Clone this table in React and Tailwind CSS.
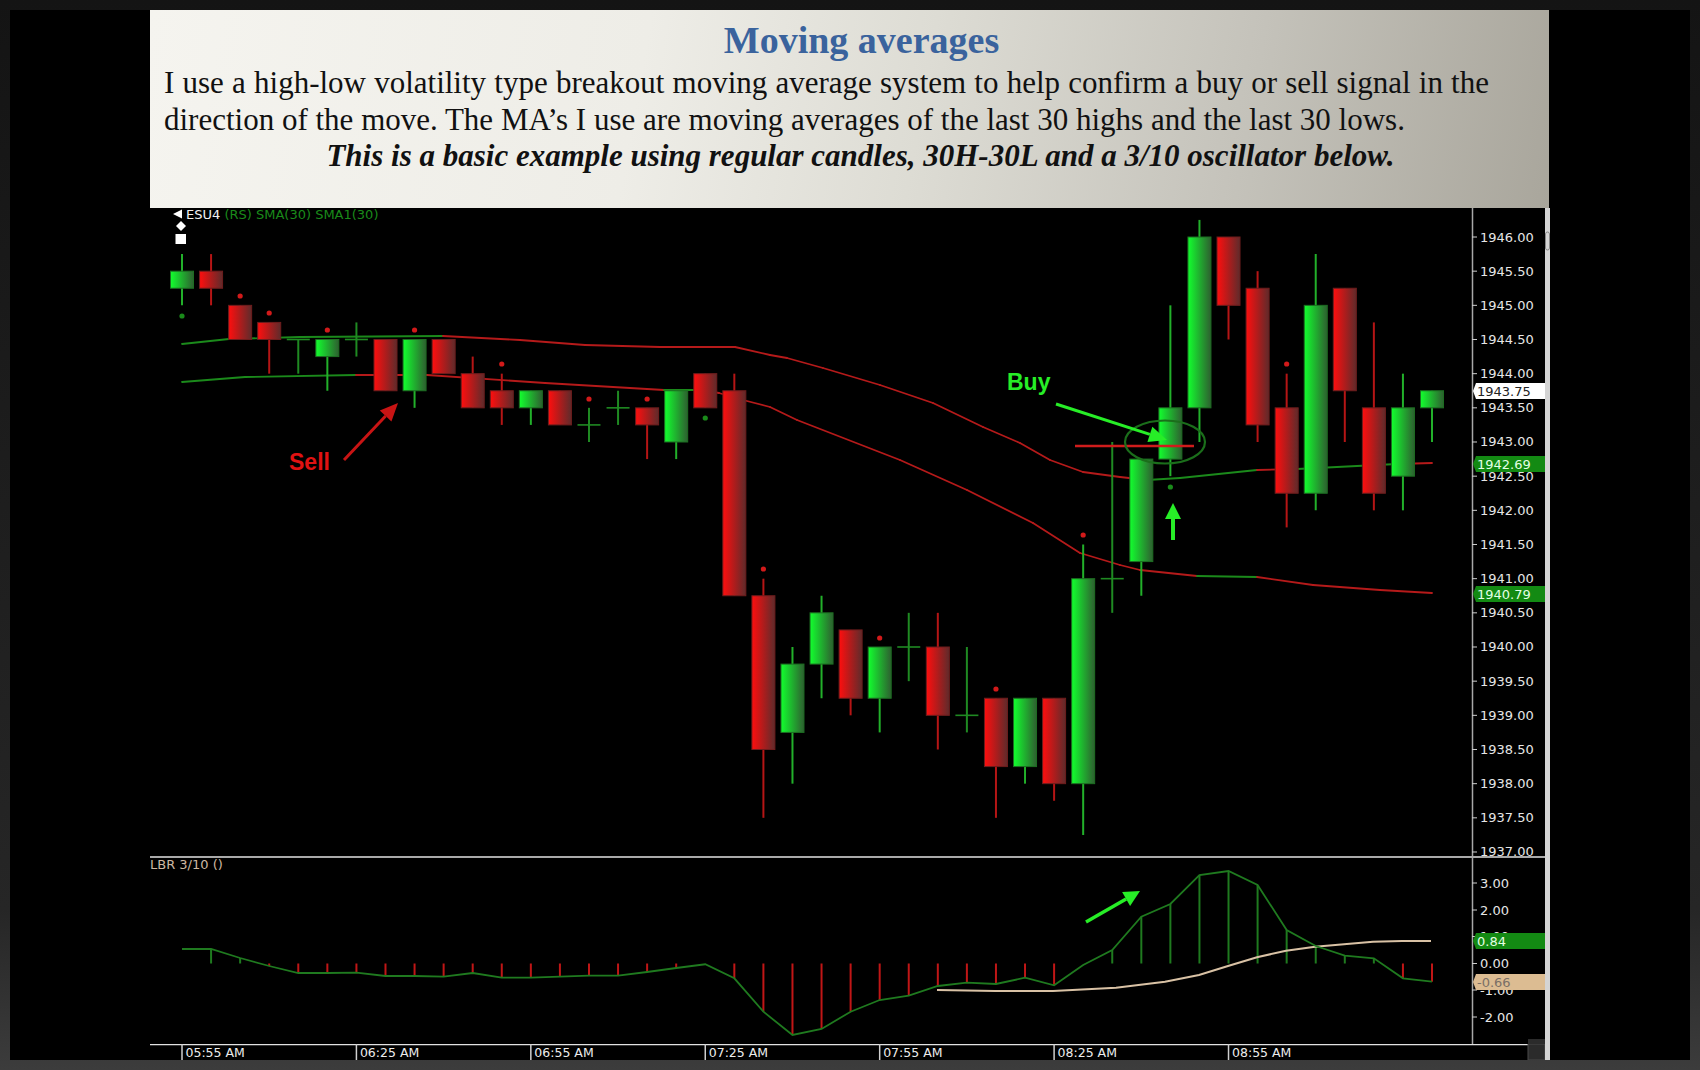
import React from 'react';

// chart geometry (page pixels)
const X0 = 182;
const DX = 29.07;
const cx = (i) => X0 + i * DX;
const py = (p) => 237 + (1946 - p) * 68.333;

// [open, high, low, close]
const CANDLES = [
  [1945.25, 1945.75, 1945.0, 1945.5],
  [1945.5, 1945.75, 1945.0, 1945.25],
  [1945.0, 1945.0, 1944.5, 1944.5],
  [1944.75, 1944.75, 1944.0, 1944.5],
  [1944.5, 1944.5, 1944.0, 1944.5],
  [1944.25, 1944.5, 1943.75, 1944.5],
  [1944.5, 1944.75, 1944.25, 1944.5],
  [1944.5, 1944.5, 1943.75, 1943.75],
  [1943.75, 1944.5, 1943.5, 1944.5],
  [1944.5, 1944.5, 1944.0, 1944.0],
  [1944.0, 1944.25, 1943.5, 1943.5],
  [1943.75, 1944.0, 1943.25, 1943.5],
  [1943.5, 1943.75, 1943.25, 1943.75],
  [1943.75, 1943.75, 1943.25, 1943.25],
  [1943.25, 1943.5, 1943.0, 1943.25],
  [1943.5, 1943.75, 1943.25, 1943.5],
  [1943.5, 1943.5, 1942.75, 1943.25],
  [1943.0, 1943.75, 1942.75, 1943.75],
  [1944.0, 1944.0, 1943.5, 1943.5],
  [1943.75, 1944.0, 1940.75, 1940.75],
  [1940.75, 1941.0, 1937.5, 1938.5],
  [1938.75, 1940.0, 1938.0, 1939.75],
  [1939.75, 1940.75, 1939.25, 1940.5],
  [1940.25, 1940.25, 1939.0, 1939.25],
  [1939.25, 1940.0, 1938.75, 1940.0],
  [1940.0, 1940.5, 1939.5, 1940.0],
  [1940.0, 1940.5, 1938.5, 1939.0],
  [1939.0, 1940.0, 1938.75, 1939.0],
  [1939.25, 1939.25, 1937.5, 1938.25],
  [1938.25, 1939.25, 1938.0, 1939.25],
  [1939.25, 1939.25, 1937.75, 1938.0],
  [1938.0, 1941.5, 1937.25, 1941.0],
  [1941.0, 1943.0, 1940.5, 1941.0],
  [1941.25, 1942.75, 1940.75, 1942.75],
  [1942.75, 1945.0, 1942.5, 1943.5],
  [1943.5, 1946.25, 1943.0, 1946.0],
  [1946.0, 1946.0, 1944.5, 1945.0],
  [1945.25, 1945.5, 1943.0, 1943.25],
  [1943.5, 1944.0, 1941.75, 1942.25],
  [1942.25, 1945.75, 1942.0, 1945.0],
  [1945.25, 1945.25, 1943.0, 1943.75],
  [1943.5, 1944.75, 1942.0, 1942.25],
  [1942.5, 1944.0, 1942.0, 1943.5],
  [1943.5, 1943.75, 1943.0, 1943.75],
];

const DOTS = [
  [0, 316, 'g'], [2, 296, 'r'], [3, 313, 'r'], [5, 330, 'r'], [8, 330, 'r'],
  [11, 364, 'r'], [14, 399, 'r'], [16, 399, 'r'], [18, 418, 'g'], [20, 569, 'r'],
  [24, 638, 'r'], [28, 689, 'r'], [31, 535, 'r'], [34, 487, 'g'], [38, 364, 'r'],
];

const UPPER_MA = [
  [182, 344, 'g'], [229, 339, 'g'], [300, 337, 'g'], [443, 336, 'r'], [520, 340, 'r'],
  [585, 345, 'r'], [660, 347, 'r'], [735, 347, 'r'], [770, 355, 'r'], [787, 358, 'r'],
  [823, 368, 'r'], [880, 385, 'r'], [933, 403, 'r'], [983, 427, 'r'], [1020, 443, 'r'],
  [1050, 460, 'r'], [1083, 472, 'r'], [1120, 477, 'r'], [1147, 480, 'g'], [1180, 478, 'g'],
  [1257, 470, 'r'], [1297, 469, 'g'], [1397, 464, 'r'], [1432, 463, 'r'],
];

const LOWER_MA = [
  [182, 382, 'g'], [245, 377, 'g'], [356, 375, 'r'], [427, 375, 'r'], [545, 383, 'r'],
  [664, 390, 'g'], [700, 390, 'r'], [719, 393, 'r'], [743, 400, 'r'], [770, 407, 'r'],
  [797, 420, 'r'], [900, 460, 'r'], [967, 490, 'r'], [1033, 523, 'r'], [1080, 553, 'r'],
  [1120, 565, 'r'], [1140, 570, 'r'], [1197, 576, 'g'], [1257, 577, 'r'], [1313, 585, 'r'],
  [1380, 590, 'r'], [1432, 593, 'r'],
];

const OSC_FAST = [
  949, 949, 958, 966, 973, 973, 972.7, 976, 976, 976.7, 973, 977.7, 977.7, 976.7, 975.7,
  975.7, 972, 968, 964.3, 978.3, 1011.7, 1035, 1029, 1011.7, 1000, 995.7, 986, 982.7, 984,
  977.7, 985.3, 965, 950, 916.7, 904, 875, 871, 885, 930, 946, 955.7, 958.3, 978.3, 981.7,
];

const OSC_SLOW = [
  [937, 990], [995, 991], [1053, 991], [1116, 987.7], [1165, 981.7], [1199, 975], [1228, 966],
  [1257, 957.3], [1286, 950.7], [1315, 946.7], [1344, 944.3], [1373, 941.7], [1402, 941], [1431, 941],
];

const ZERO = 963.5;
const GREEN = '#1f8a22';

const PRICES = [];
for (let p = 1946; p >= 1937; p -= 0.5) PRICES.push(p);

const TIMES = ['05:55 AM', '06:25 AM', '06:55 AM', '07:25 AM', '07:55 AM', '08:25 AM', '08:55 AM'];

function Tag({ y, bg, fg, text }) {
  return (
    <g>
      <path d={`M1473,${y} L1476,${y - 8} H1545 V${y + 8} H1476 Z`} fill={bg} />
      <text x={1477} y={y + 4.5} fill={fg} fontSize="13">{text}</text>
    </g>
  );
}

function Candle({ c, i }) {
  const [o, h, l, cl] = c;
  const x = cx(i);
  const up = cl >= o;
  if (o === cl) {
    return (
      <g stroke={GREEN} strokeWidth="2">
        <line x1={x} x2={x} y1={py(h)} y2={py(l)} />
        <line x1={x - 11.5} x2={x + 11.5} y1={py(o)} y2={py(o)} strokeWidth="1.6" />
      </g>
    );
  }
  const top = py(Math.max(o, cl));
  const bot = py(Math.min(o, cl));
  return (
    <g>
      <line x1={x} x2={x} y1={py(h)} y2={py(l)} stroke={up ? '#22b02a' : '#b51515'} strokeWidth="2" />
      <rect
        x={x - 11.5}
        y={top}
        width="23"
        height={bot - top}
        fill={up ? 'url(#gUp)' : 'url(#gDn)'}
        stroke={up ? '#1d6e22' : '#6e1d1d'}
        strokeWidth="1"
      />
    </g>
  );
}

function MaLine({ pts }) {
  return pts.slice(1).map((p, k) => {
    const a = pts[k];
    return (
      <line
        key={k}
        x1={a[0]}
        y1={a[1]}
        x2={p[0]}
        y2={p[1]}
        stroke={a[2] === 'g' ? '#1b8a1b' : '#b51a1a'}
        strokeWidth="1.8"
        strokeLinecap="round"
      />
    );
  });
}

function Arrow({ x1, y1, x2, y2, color, w = 3, head = 18, half = 8 }) {
  const dx = x2 - x1;
  const dy = y2 - y1;
  const len = Math.hypot(dx, dy);
  const ux = dx / len;
  const uy = dy / len;
  const bx = x2 - ux * head;
  const by = y2 - uy * head;
  return (
    <g>
      <line x1={x1} y1={y1} x2={bx} y2={by} stroke={color} strokeWidth={w} />
      <polygon
        points={`${x2},${y2} ${bx - uy * half},${by + ux * half} ${bx + uy * half},${by - ux * half}`}
        fill={color}
      />
    </g>
  );
}

function MainPane() {
  return (
    <svg width="1400" height="648" viewBox="150 208 1400 648" className="block font-['DejaVu_Sans',sans-serif]">
      <defs>
        <linearGradient id="gUp" x1="0" x2="1" y1="0" y2="0">
          <stop offset="0" stopColor="#12ff2e" />
          <stop offset="1" stopColor="#2e5f30" />
        </linearGradient>
        <linearGradient id="gDn" x1="0" x2="1" y1="0" y2="0">
          <stop offset="0" stopColor="#ff0e0e" />
          <stop offset="1" stopColor="#5e2b2b" />
        </linearGradient>
      </defs>

      <polygon points="173,214 182,209.5 182,218.5" fill="#fff" />
      <text x="186" y="218.5" fontSize="13" fill="#f2f2f2">
        ESU4<tspan fill="#1a8a1a"> (RS) SMA(30) SMA1(30)</tspan>
      </text>
      <polygon points="181,221 186,226 181,231 176,226" fill="#fff" />
      <rect x="175.5" y="234" width="10.5" height="10" fill="#fff" />

      <MaLine pts={UPPER_MA} />
      <MaLine pts={LOWER_MA} />

      {CANDLES.map((c, i) => (
        <Candle key={i} c={c} i={i} />
      ))}

      {DOTS.map(([i, y, col]) => (
        <circle key={i} cx={cx(i)} cy={y} r="2.6" fill={col === 'g' ? '#1a8a1a' : '#d21a1a'} />
      ))}

      {/* annotations */}
      <line x1="1075" x2="1194" y1="446" y2="446" stroke="#d01c1c" strokeWidth="2.5" />
      <ellipse cx="1165" cy="442" rx="40" ry="21.5" fill="none" stroke="#1b6e1b" strokeWidth="2.2" />
      <Arrow x1={1056} y1={404} x2={1167} y2={440} color="#27ee27" w={3} head={18} half={8} />
      <Arrow x1={1173} y1={540} x2={1173} y2={503} color="#27ee27" w={4} head={16} half={8} />
      <text x="1007" y="390" fontSize="23" fontWeight="700" fill="#27ee27" fontFamily="Liberation Sans, Arial, sans-serif">
        Buy
      </text>
      <Arrow x1={344} y1={460} x2={398} y2={403} color="#c81414" w={3} head={18} half={8} />
      <text x="289" y="470" fontSize="23" fontWeight="700" fill="#e01212" fontFamily="Liberation Sans, Arial, sans-serif">
        Sell
      </text>

      {/* price axis */}
      <line x1="1472.5" x2="1472.5" y1="208" y2="856" stroke="#a8a8a8" strokeWidth="1.5" />
      {PRICES.map((p) => (
        <g key={p}>
          <line x1="1472" x2="1477" y1={py(p)} y2={py(p)} stroke="#cfcfcf" />
          <text x="1480" y={py(p) + 4.5} fill="#e6e6e6" fontSize="13">
            {p.toFixed(2)}
          </text>
        </g>
      ))}
      <Tag y={391} bg="#ffffff" fg="#222" text="1943.75" />
      <Tag y={464} bg="#138a13" fg="#e4ffe4" text="1942.69" />
      <Tag y={594} bg="#138a13" fg="#e4ffe4" text="1940.79" />
      <rect x="1545" y="208" width="5" height="648" fill="#d4d4d4" />
      <rect x="1545.5" y="232" width="4" height="18" rx="2" fill="none" stroke="#888" />
    </svg>
  );
}

function OscPane() {
  const fast = OSC_FAST.map((y, i) => `${cx(i)},${y}`).join(' ');
  const slow = OSC_SLOW.map(([x, y]) => `${x},${y}`).join(' ');
  const levels = [
    [3, 883], [2, 910], [1, 936.5], [0, 963.5], [-1, 990], [-2, 1017],
  ];
  return (
    <svg width="1400" height="188" viewBox="150 856 1400 188" className="block font-['DejaVu_Sans',sans-serif]">
      <line x1="150" x2="1545" y1="857" y2="857" stroke="#e2e2e2" strokeWidth="1.5" />
      <text x="150" y="868.5" fontSize="13" fill="#cdb8a2">LBR 3/10 ()</text>

      {OSC_FAST.map((y, i) =>
        i > 0 && Math.abs(y - ZERO) > 1.5 ? (
          <line
            key={i}
            x1={cx(i)}
            x2={cx(i)}
            y1={ZERO}
            y2={y}
            stroke={y < ZERO ? '#1f7a1f' : '#c01616'}
            strokeWidth="2"
          />
        ) : null
      )}
      <polyline points={slow} fill="none" stroke="#d9c2a5" strokeWidth="2" />
      <polyline points={fast} fill="none" stroke="#1f7a1f" strokeWidth="1.8" />
      <Arrow x1={1086} y1={922} x2={1140} y2={891} color="#27ee27" w={3.5} head={16} half={8} />

      <line x1="1472.5" x2="1472.5" y1="857" y2="1044" stroke="#a8a8a8" strokeWidth="1.5" />
      {levels.map(([v, y]) => (
        <g key={v}>
          <line x1="1472" x2="1477" y1={y} y2={y} stroke="#cfcfcf" />
          <text x="1480" y={y + 4.5} fill="#e6e6e6" fontSize="13">
            {v.toFixed(2)}
          </text>
        </g>
      ))}
      <Tag y={941} bg="#138a13" fg="#e4ffe4" text="0.84" />
      <Tag y={982} bg="#dcbc92" fg="#7a6f66" text="-0.66" />
      <rect x="1545" y="856" width="5" height="188" fill="#d4d4d4" />
      <rect x="1528" y="1039" width="17" height="5" fill="#2b2b2b" />
    </svg>
  );
}

function TimeAxis() {
  return (
    <svg width="1400" height="16" viewBox="150 1044 1400 16" className="block font-['DejaVu_Sans',sans-serif]">
      <line x1="150" x2="1528" y1="1044.5" y2="1044.5" stroke="#e2e2e2" strokeWidth="1.5" />
      {TIMES.map((t, k) => {
        const x = cx(k * 6);
        return (
          <g key={t}>
            <line x1={x} x2={x} y1="1044" y2="1060" stroke="#cfcfcf" strokeWidth="1.5" />
            <text x={x + 3.5} y="1057" fontSize="12.5" fill="#ececec">{t}</text>
          </g>
        );
      })}
      <rect x="1528" y="1044" width="17" height="16" fill="#2b2b2b" stroke="#4a4a4a" />
      <rect x="1545" y="1044" width="5" height="16" fill="#d4d4d4" />
    </svg>
  );
}

export default function App() {
  return (
    <div className="w-[1700px] h-[1070px] bg-[linear-gradient(180deg,#141414_0%,#262626_85%,#3c3c3c_100%)] p-[10px]">
      <div className="w-full h-full bg-black pl-[140px] pr-[140px] flex flex-col">
        <header className="h-[198px] w-[1399px] pt-[10px] pl-[14px] bg-[linear-gradient(100deg,#f5f4ef_0%,#eeede7_35%,#dddcd4_55%,#c4c2ba_78%,#a9a69c_100%)] font-['Liberation_Serif',serif] text-[#111]">
          <h1 className="pl-[10px] text-center text-[38px] leading-[40px] font-bold text-[#3a639d]">
            Moving averages
          </h1>
          <p className="mt-[5px] w-[1325px] text-justify text-[31px] leading-[36.5px]">
            I use a high-low volatility type breakout moving average system to help confirm a buy or sell signal in the direction of the move. The MA’s I use are moving averages of the last 30 highs and the last 30 lows.
          </p>
          <p className="pl-[8px] text-center text-[31px] leading-[36.5px] font-bold italic">
            This is a basic example using regular candles, 30H-30L and a 3/10 oscillator below.
          </p>
        </header>
        <div className="flex flex-col">
          <MainPane />
          <OscPane />
          <TimeAxis />
        </div>
      </div>
    </div>
  );
}
